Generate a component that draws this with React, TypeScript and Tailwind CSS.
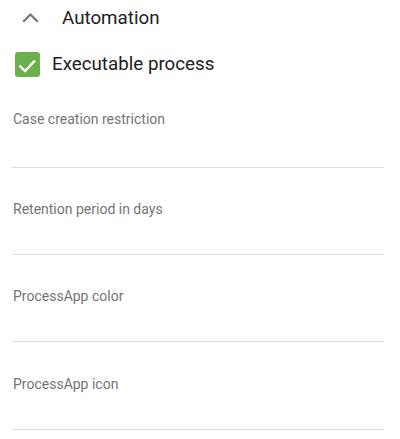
const fields = [
  "Case creation restriction",
  "Retention period in days",
  "ProcessApp color",
  "ProcessApp icon",
];

const Field = ({ label, index }: { label: string; index: number }) => {
  const top = index === 0 ? "pt-0" : index === 3 ? "pt-8" : "pt-[31px]";
  const gap = index === 0 ? "h-[38px]" : "h-[35px]";
  return (
    <div className={`${top} ml-3 mr-4 border-b border-[#e0e0e0]`}>
      <p className="pl-px text-sm leading-5 text-[#757575]">{label}</p>
      <div className={gap}></div>
    </div>
  );
};

const App = () => {
  return (
    <div className="w-[400px] h-[439px] bg-white overflow-hidden font-['Roboto',sans-serif]">
      <div className="flex items-center h-9">
        <svg width="17" height="10" viewBox="0 0 17 10" className="ml-[22px]">
          <polyline points="1.2,8.8 8.5,1.5 15.8,8.8" fill="none" stroke="#757575" strokeWidth="2.2" />
        </svg>
        <span className="ml-[23px] text-[18.75px] text-[#212121]">Automation</span>
      </div>

      <div className="flex items-center h-10 mt-2">
        <div className="ml-[15px] w-[25px] h-[25px] rounded-[3px] bg-[#6ab04c] flex items-center justify-center">
          <svg width="25" height="25" viewBox="0 0 25 25">
            <polyline points="4.5,13.5 10,19 20,8.5" fill="none" stroke="#ffffff" strokeWidth="2.4" />
          </svg>
        </div>
        <span className="ml-3 text-[18.75px] text-[#212121]">Executable process</span>
      </div>

      <div className="mt-[25px]">
        {fields.map((f, i) => (
          <Field key={i} label={f} index={i} />
        ))}
      </div>
    </div>
  );
};

export default App;
